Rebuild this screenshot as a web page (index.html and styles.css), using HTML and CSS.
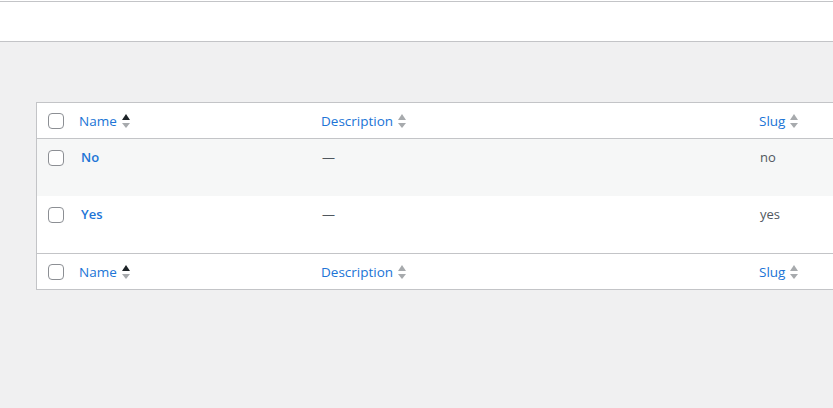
FILE: index.html
```html
<!DOCTYPE html>
<html>
<head>
<meta charset="utf-8">
<link rel="stylesheet" href="styles.css">
</head>
<body>
<div class="topbar"><div class="topbar-inner"></div></div>
<div class="wrap">
  <table class="list">
    <colgroup>
      <col class="c-check"><col class="c-name"><col class="c-desc"><col class="c-slug">
    </colgroup>
    <thead>
      <tr>
        <th class="check"><span class="cb"></span></th>
        <th><a class="sort">Name<svg class="arrows" viewBox="0 0 8 14" width="8" height="14"><path class="up" d="M4 0 L8 6 L0 6 Z"/><path class="down" d="M0 9 L8 9 L4 14 Z"/></svg></a></th>
        <th><a class="sort">Description<svg class="arrows" viewBox="0 0 8 14" width="8" height="14"><path class="down" d="M4 0 L8 6 L0 6 Z"/><path class="down" d="M0 9 L8 9 L4 14 Z"/></svg></a></th>
        <th><a class="sort">Slug<svg class="arrows" viewBox="0 0 8 14" width="8" height="14"><path class="down" d="M4 0 L8 6 L0 6 Z"/><path class="down" d="M0 9 L8 9 L4 14 Z"/></svg></a></th>
      </tr>
    </thead>
    <tbody>
      <tr class="alt">
        <td class="check"><span class="cb"></span></td>
        <td><a class="title">No</a></td>
        <td class="muted">—</td>
        <td class="muted">no</td>
      </tr>
      <tr>
        <td class="check"><span class="cb"></span></td>
        <td><a class="title">Yes</a></td>
        <td class="muted">—</td>
        <td class="muted">yes</td>
      </tr>
    </tbody>
    <tfoot>
      <tr>
        <th class="check"><span class="cb"></span></th>
        <th><a class="sort">Name<svg class="arrows" viewBox="0 0 8 14" width="8" height="14"><path class="up" d="M4 0 L8 6 L0 6 Z"/><path class="down" d="M0 9 L8 9 L4 14 Z"/></svg></a></th>
        <th><a class="sort">Description<svg class="arrows" viewBox="0 0 8 14" width="8" height="14"><path class="down" d="M4 0 L8 6 L0 6 Z"/><path class="down" d="M0 9 L8 9 L4 14 Z"/></svg></a></th>
        <th><a class="sort">Slug<svg class="arrows" viewBox="0 0 8 14" width="8" height="14"><path class="down" d="M4 0 L8 6 L0 6 Z"/><path class="down" d="M0 9 L8 9 L4 14 Z"/></svg></a></th>
      </tr>
    </tfoot>
  </table>
</div>
</body>
</html>
```
FILE: styles.css
```css
html, body {
  margin: 0;
  padding: 0;
  overflow: hidden;
}
body {
  background: #f0f0f1;
  font-family: "Open Sans", "Noto Sans", sans-serif;
  color: #50575e;
  width: 833px;
  height: 408px;
}
.topbar {
  background: #fff;
  padding-top: 1px;
}
.topbar-inner {
  border-top: 1px solid #c3c4c7;
  border-bottom: 1px solid #c3c4c7;
  height: 39px;
  background: #fff;
}
.wrap {
  padding: 60px 0 0 36px;
}
.list {
  border-collapse: separate;
  border-spacing: 0;
  border: 1px solid #c3c4c7;
  background: #fff;
  table-layout: fixed;
  width: 1000px;
}
.c-check { width: 32px; }
.c-name { width: 242px; }
.c-desc { width: 438px; }
.c-slug { width: auto; }
th, td {
  text-align: left;
  vertical-align: top;
  padding: 0 10px;
  font-weight: 400;
}
thead th, tfoot th {
  height: 27px;
  padding-top: 8px;
  padding-bottom: 0;
  font-size: 13.5px;
  line-height: 20px;
}
thead th { border-bottom: 1px solid #c3c4c7; }
tfoot th { border-top: 1px solid #c3c4c7; }
tbody td {
  height: 49px;
  padding-top: 8px;
  padding-bottom: 0;
  font-size: 13px;
  line-height: 20px;
}
tbody tr.alt td { background: #f6f7f7; }
th.check, td.check {
  padding-left: 11px;
  padding-right: 0;
}
thead th.check, tfoot th.check { padding-top: 10px; height: 25px; }
tbody td.check { padding-top: 11px; height: 46px; }
.cb {
  display: block;
  width: 16px;
  height: 16px;
  box-sizing: border-box;
  border: 1px solid #8c8f94;
  border-radius: 4px;
  background: #fff;
}
.sort {
  color: #2074d6;
  display: inline-flex;
  align-items: center;
}
.arrows {
  margin-left: 5px;
  display: block;
}
.arrows .up { fill: #1d2327; }
.arrows .down { fill: #a7aaad; }
.title {
  color: #2074d6;
  font-weight: 600;
  padding-left: 2px;
}
td.muted { padding-left: 11px; }
```
